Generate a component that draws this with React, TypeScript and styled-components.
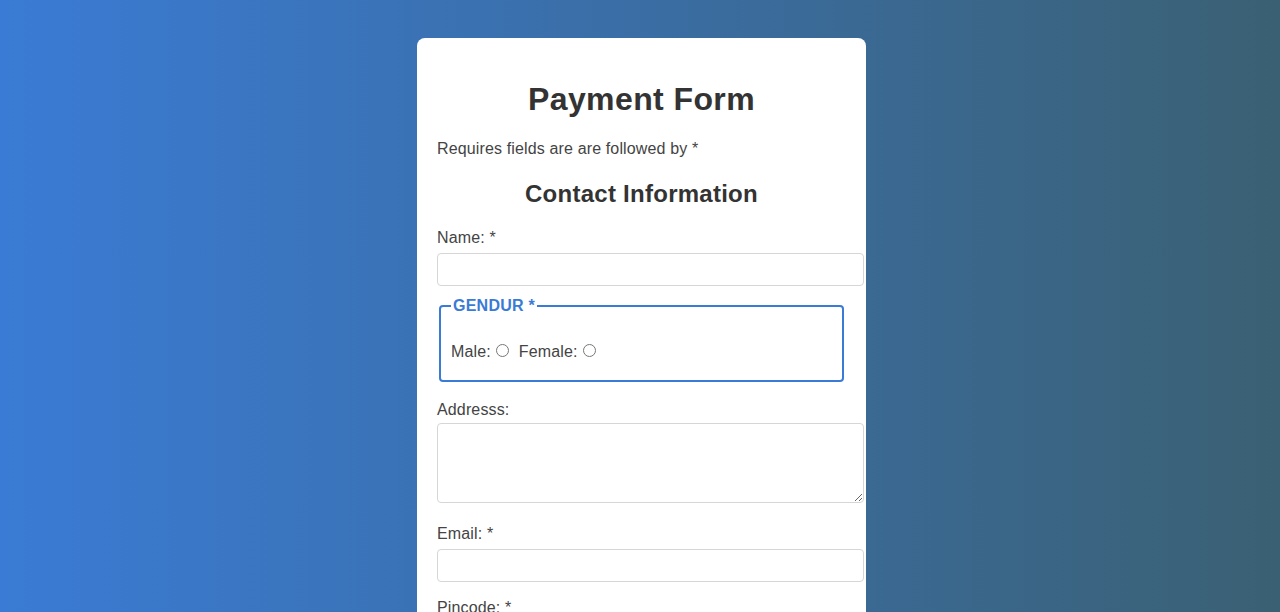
import React from 'react'
import styled, { createGlobalStyle } from 'styled-components'

const GlobalStyle = createGlobalStyle`
  html, body {
    margin: 0;
    padding: 0;
  }
  body {
    font-family: "Liberation Sans", Arial, sans-serif;
    background: linear-gradient(to right, #3a7bd5, #3a6073);
    min-height: 100vh;
  }
`

const Page = styled.div`
  display: flex;
  justify-content: center;
  padding: 38px 0 40px 3px;
  min-height: 100vh;
  box-sizing: border-box;
`

const Card = styled.form`
  width: 449px;
  box-sizing: border-box;
  padding: 20px;
  background: #fff;
  border-radius: 8px;
  color: #444;
  font-size: 16px;
  letter-spacing: 0.14px;
  align-self: flex-start;
`

const Title = styled.h1`
  margin: 23px 0 22px;
  font-size: 32px;
  line-height: 37px;
  font-weight: 700;
  letter-spacing: 0.4px;
  text-align: center;
  color: #333;
`

const Note = styled.p`
  margin: 0;
  line-height: 18px;
`

const Section = styled.h2`
  margin: 22px 0 21px;
  font-size: 24px;
  line-height: 28px;
  font-weight: 700;
  letter-spacing: 0.26px;
  text-align: center;
  color: #333;
`

const Field = styled.div<{ $gap?: number }>`
  display: flex;
  flex-direction: column;
  align-items: flex-start;
  margin-bottom: ${(p) => p.$gap ?? 17}px;
`

const Label = styled.label<{ $gap?: number }>`
  display: block;
  line-height: 18px;
  margin-bottom: ${(p) => p.$gap ?? 6}px;
`

const TextInput = styled.input`
  display: block;
  width: 100%;
  height: 15px;
  padding: 8px;
  margin: 0;
  border: 1px solid #d6d6d6;
  border-radius: 4px;
  font-family: inherit;
  font-size: 14px;
  box-sizing: content-box;
  background: #fff;
`

const TextArea = styled.textarea`
  display: block;
  width: 100%;
  height: 62px;
  padding: 8px;
  margin: 0;
  border: 1px solid #d6d6d6;
  border-radius: 4px;
  font-family: inherit;
  font-size: 14px;
  box-sizing: content-box;
  background: #fff;
`

const Fieldset = styled.fieldset`
  margin: 0 2px 19px;
  padding: 0 10px 19px;
  border: 2px solid #3a7bd5;
  border-radius: 4px;
`

const Legend = styled.legend`
  padding: 0 2px;
  font-size: 16px;
  line-height: 18px;
  font-weight: 700;
  letter-spacing: 0.25px;
  color: #3a7bd5;
`

const RadioRow = styled.div`
  display: flex;
  align-items: center;
  margin-top: 28px;
  line-height: 18px;
`

const RadioLabel = styled.label`
  display: flex;
  align-items: center;
  margin-right: 10px;
`

const Radio = styled.input`
  width: 13px;
  height: 13px;
  margin: 0 0 4px 5px;
`

export default function App() {
  return (
    <>
      <GlobalStyle />
      <Page>
        <Card onSubmit={(e) => e.preventDefault()}>
          <Title>Payment Form</Title>
          <Note>Requires fields are are followed by *</Note>
          <Section>Contact Information</Section>
          <Field $gap={11}>
            <Label htmlFor="name">Name: *</Label>
            <TextInput id="name" type="text" />
          </Field>
          <Fieldset>
            <Legend>GENDUR *</Legend>
            <RadioRow>
              <RadioLabel>
                Male:
                <Radio type="radio" name="gender" value="male" />
              </RadioLabel>
              <RadioLabel>
                Female:
                <Radio type="radio" name="gender" value="female" />
              </RadioLabel>
            </RadioRow>
          </Fieldset>
          <Field $gap={22}>
            <Label htmlFor="address" $gap={4}>Addresss:</Label>
            <TextArea id="address" />
          </Field>
          <Field $gap={17}>
            <Label htmlFor="email">Email: *</Label>
            <TextInput id="email" type="email" />
          </Field>
          <Field $gap={17}>
            <Label htmlFor="pincode">Pincode: *</Label>
            <TextInput id="pincode" type="number" />
          </Field>
        </Card>
      </Page>
    </>
  )
}
